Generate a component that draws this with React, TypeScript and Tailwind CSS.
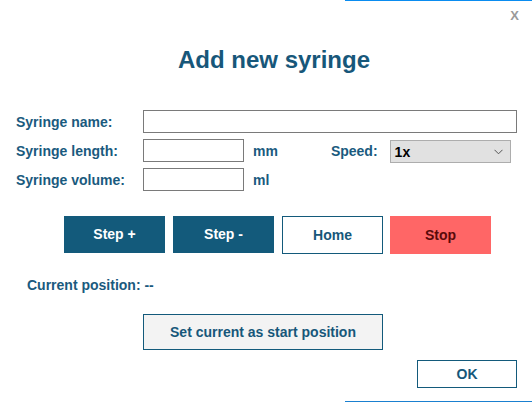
import React from 'react';

const labelCls = 'w-[127px] shrink-0 self-start mt-[4px] leading-4 text-[14px] font-bold text-[#1a5a7e]';
const inputCls = 'h-[23px] border border-[#7a7a7a] bg-white px-1 text-[14px] outline-none';

const AddSyringeDialog: React.FC = () => {
    return (
        <div className="relative w-[532px] h-[402px] bg-white overflow-hidden font-['Liberation_Sans',Arial,sans-serif]">
            {/* thin highlight edges from the host window */}
            <div className="absolute top-0 left-[345px] right-0 h-px bg-[#0a8cf0]" />
            <div className="absolute bottom-0 left-[345px] right-0 h-px bg-[#1a80d0]" />

            <button className="absolute top-[8px] right-[13px] text-[13px] font-bold leading-4 text-[#9a9a9a]">
                X
            </button>

            <div className="pl-4">
                <h1 className="mt-[46px] text-center text-[24px] leading-[28px] font-bold text-[#17577a]">
                    Add new syringe
                </h1>

                <div className="mt-[36px] flex flex-col gap-[6px] pr-[15px]">
                    <div className="flex h-[23px]">
                        <label className={labelCls}>Syringe name:</label>
                        <input className={`${inputCls} flex-1`} />
                    </div>
                    <div className="flex h-[23px]">
                        <label className={labelCls}>Syringe length:</label>
                        <input className={`${inputCls} w-[101px]`} />
                        <span className="ml-[9px] self-start mt-[4px] leading-4 text-[14px] font-bold text-[#1a5a7e]">mm</span>
                        <span className="ml-[53px] self-start mt-[4px] leading-4 text-[14px] font-bold text-[#1a5a7e]">Speed:</span>
                        <div className="ml-[12px] mt-px w-[121px] h-[23px] flex items-center justify-between border border-[#adadad] bg-[#e1e1e1] pl-[4px] pr-[7px]">
                            <span className="text-[14px] font-bold text-black leading-4">1x</span>
                            <svg width="9" height="6" viewBox="0 0 9 6" fill="none">
                                <path d="M0.5 0.8 L4.5 4.8 L8.5 0.8" stroke="#555" strokeWidth="1" />
                            </svg>
                        </div>
                    </div>
                    <div className="flex h-[23px]">
                        <label className={labelCls}>Syringe volume:</label>
                        <input className={`${inputCls} w-[101px]`} />
                        <span className="ml-[9px] self-start mt-[4px] leading-4 text-[14px] font-bold text-[#1a5a7e]">ml</span>
                    </div>
                </div>

                <div className="mt-[25px] ml-[48px] flex gap-2">
                    <button className="w-[101px] h-[37px] bg-[#135a7b] text-white text-[14px] font-bold">Step +</button>
                    <button className="w-[101px] h-[37px] bg-[#135a7b] text-white text-[14px] font-bold">Step -</button>
                    <button className="w-[101px] h-[38px] border border-[#135a7b] bg-white text-[#17577a] text-[14px] font-bold">Home</button>
                    <button className="w-[101px] h-[38px] -ml-px bg-[#ff6666] text-[#5a0a0a] text-[14px] font-bold">Stop</button>
                </div>

                <div className="mt-[23px] ml-[11px] leading-4 text-[14px] font-bold text-[#1a5a7e]">
                    Current position: --
                </div>

                <button className="mt-[21px] ml-[127px] w-[240px] h-[36px] border border-[#135a7b] bg-[#f3f3f3] text-[14px] font-bold text-[#17577a]">
                    Set current as start position
                </button>

                <div className="mt-[10px] flex justify-end pr-[15px]">
                    <button className="w-[100px] h-[28px] border border-[#135a7b] bg-white text-[14px] font-bold text-[#17577a]">
                        OK
                    </button>
                </div>
            </div>
        </div>
    );
};

export default function App() {
    return <AddSyringeDialog />;
}
